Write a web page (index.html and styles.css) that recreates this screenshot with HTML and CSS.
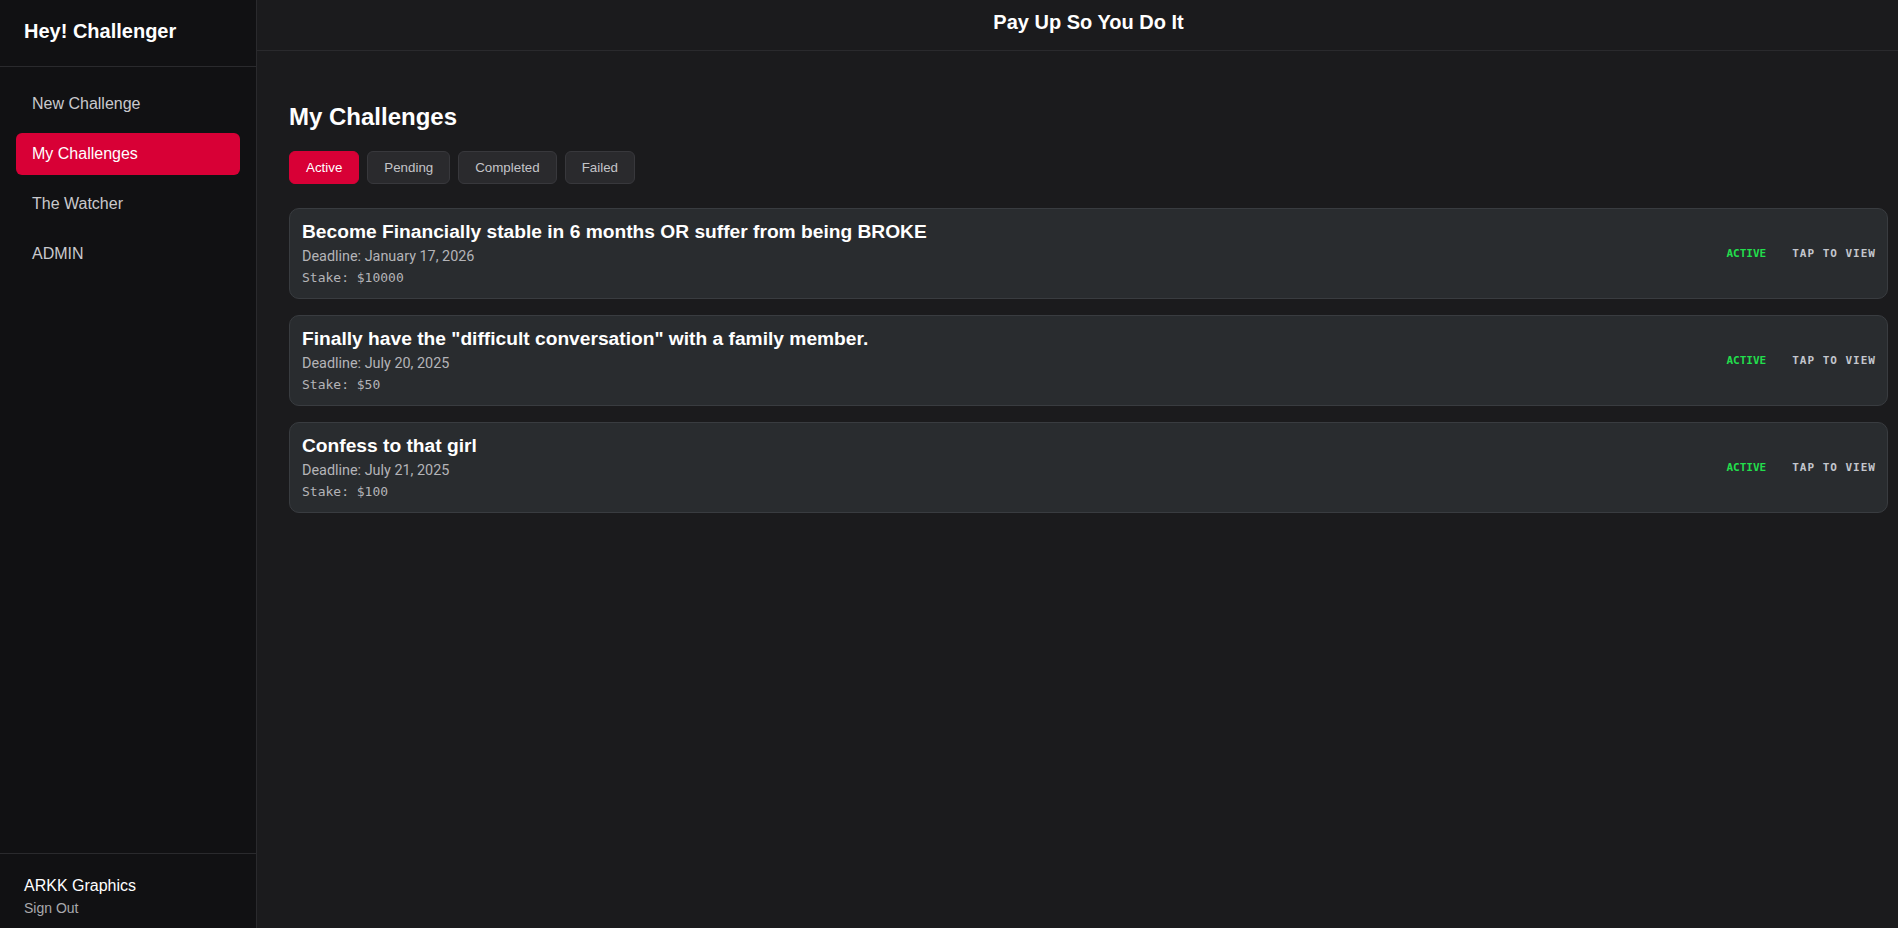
FILE: index.html
```html
<!DOCTYPE html>
<html lang="en">
<head>
<meta charset="utf-8">
<title>Hey! Challenger</title>
<link rel="stylesheet" href="styles.css">
</head>
<body>
<div class="app">
  <aside class="sidebar">
    <div class="brand">Hey! Challenger</div>
    <nav class="nav">
      <a class="nav-item">New Challenge</a>
      <a class="nav-item active">My Challenges</a>
      <a class="nav-item">The Watcher</a>
      <a class="nav-item">ADMIN</a>
    </nav>
    <div class="user">
      <div class="user-name">ARKK Graphics</div>
      <div class="sign-out">Sign Out</div>
    </div>
  </aside>
  <main class="main">
    <header class="topbar">Pay Up So You Do It</header>
    <section class="content">
      <h2 class="page-title">My Challenges</h2>
      <div class="tabs">
        <button class="tab active">Active</button>
        <button class="tab">Pending</button>
        <button class="tab">Completed</button>
        <button class="tab">Failed</button>
      </div>
      <div class="cards">
        <div class="card">
          <div class="card-info">
            <div class="card-title">Become Financially stable in 6 months OR suffer from being BROKE</div>
            <div class="card-deadline">Deadline: January 17, 2026</div>
            <div class="card-stake">Stake: $10000</div>
          </div>
          <div class="card-meta">
            <span class="status">ACTIVE</span>
            <span class="tap">TAP TO VIEW</span>
          </div>
        </div>
        <div class="card">
          <div class="card-info">
            <div class="card-title">Finally have the "difficult conversation" with a family member.</div>
            <div class="card-deadline">Deadline: July 20, 2025</div>
            <div class="card-stake">Stake: $50</div>
          </div>
          <div class="card-meta">
            <span class="status">ACTIVE</span>
            <span class="tap">TAP TO VIEW</span>
          </div>
        </div>
        <div class="card">
          <div class="card-info">
            <div class="card-title">Confess to that girl</div>
            <div class="card-deadline">Deadline: July 21, 2025</div>
            <div class="card-stake">Stake: $100</div>
          </div>
          <div class="card-meta">
            <span class="status">ACTIVE</span>
            <span class="tap">TAP TO VIEW</span>
          </div>
        </div>
      </div>
    </section>
  </main>
</div>
</body>
</html>
```

FILE: styles.css
```css
* { box-sizing: border-box; }

html, body {
  margin: 0;
  padding: 0;
  height: 100%;
  background: #1b1b1d;
  color: #fff;
  font-family: "Liberation Sans", Arial, sans-serif;
}

.app {
  display: flex;
  height: 100vh;
  overflow: hidden;
}

.sidebar {
  width: 257px;
  flex: none;
  background: #111113;
  border-right: 1px solid #2a2a2d;
  display: flex;
  flex-direction: column;
}

.brand {
  height: 67px;
  padding: 19px 24px 0;
  font-size: 20px;
  line-height: 24px;
  font-weight: bold;
  color: #fff;
  border-bottom: 1px solid #2a2a2d;
}

.nav {
  flex: 1;
  display: flex;
  flex-direction: column;
  gap: 8px;
  padding: 16px 16px;
}

.nav-item {
  display: block;
  height: 42px;
  padding: 12px 16px;
  font-size: 16px;
  line-height: 18px;
  color: #c9c9cd;
  border-radius: 6px;
}

.nav-item.active {
  background: #d80036;
  color: #fff;
}

.user {
  border-top: 1px solid #2a2a2d;
  padding: 23px 24px 12px;
}

.user-name {
  font-size: 16px;
  line-height: 18px;
  color: #fff;
}

.sign-out {
  margin-top: 5px;
  font-size: 14px;
  line-height: 16px;
  color: #a9a9ad;
}

.main {
  flex: 1;
  display: flex;
  flex-direction: column;
  min-width: 0;
}

.topbar {
  height: 51px;
  padding: 10px 0 0 22px;
  text-align: center;
  font-size: 20px;
  line-height: 24px;
  font-weight: bold;
  color: #fff;
  border-bottom: 1px solid #2a2a2d;
}

.content {
  padding: 32px 10px 32px 32px;
}

.page-title {
  margin: 20px 0 20px;
  font-size: 24px;
  line-height: 28px;
  font-weight: bold;
  color: #fff;
}

.tabs {
  display: flex;
  gap: 8px;
  margin-bottom: 24px;
}

.tab {
  font-family: "Liberation Sans", Arial, sans-serif;
  font-size: 13.333px;
  line-height: 15px;
  padding: 8px 16px;
  border-radius: 6px;
  border: 1px solid #38383c;
  background: #2a2a2d;
  color: #c4c4c8;
}

.tab.active {
  background: #d80036;
  border-color: #d80036;
  color: #fff;
}

.cards {
  display: flex;
  flex-direction: column;
  gap: 16px;
}

.card {
  display: flex;
  align-items: center;
  justify-content: space-between;
  padding: 12px 11px 12px 12px;
  background: #292c2f;
  border: 1px solid #393c40;
  border-radius: 10px;
}

.card-title {
  font-size: 19.2px;
  line-height: 22px;
  font-weight: bold;
  color: #fff;
}

.card-deadline {
  margin-top: 5px;
  font-family: Roboto, "Noto Sans", sans-serif;
  font-size: 14.4px;
  line-height: 18px;
  color: #b4b4b8;
}

.card-stake {
  margin-top: 4px;
  font-family: "DejaVu Sans Mono", monospace;
  font-size: 13px;
  line-height: 16px;
  color: #b4b4b8;
}

.card-meta {
  display: flex;
  align-items: center;
  gap: 26px;
  font-family: "DejaVu Sans Mono", monospace;
  font-size: 11px;
  font-weight: bold;
}

.status {
  color: #22de4c;
}

.tap {
  color: #c3c6cd;
  letter-spacing: 1px;
}
```
